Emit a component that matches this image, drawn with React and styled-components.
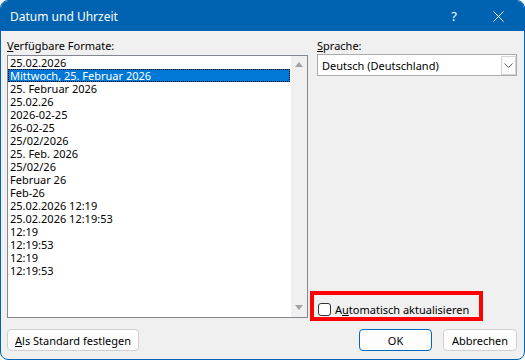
import React from 'react'
import styled, { createGlobalStyle } from 'styled-components'

const formats = [
  '25.02.2026',
  'Mittwoch, 25. Februar 2026',
  '25. Februar 2026',
  '25.02.26',
  '2026-02-25',
  '26-02-25',
  '25/02/2026',
  '25. Feb. 2026',
  '25/02/26',
  'Februar 26',
  'Feb-26',
  '25.02.2026 12:19',
  '25.02.2026 12:19:53',
  '12:19',
  '12:19:53',
  '12:19',
  '12:19:53',
]

export default function App () {
  return (
    <>
      <GlobalStyle />
      <Window>
        <TitleBar>
          <Title>Datum und Uhrzeit</Title>
          <Help>?</Help>
          <Close>
            <svg width="11" height="11" viewBox="0 0 11 11">
              <path d="M0.5 0.5 L10.5 10.5 M10.5 0.5 L0.5 10.5" stroke="#fff" strokeWidth="1" />
            </svg>
          </Close>
        </TitleBar>
        <Body>
          <Main>
            <Column>
              <Label><Key>V</Key>erfügbare Formate:</Label>
              <ListBox>
                <Items>
                  {formats.map((f, i) => (
                    <Item key={i} selected={i === 1}>{f}</Item>
                  ))}
                </Items>
                <Scrollbar>
                  <Arrow />
                  <Arrow down />
                </Scrollbar>
              </ListBox>
            </Column>
            <Column>
              <Label><Key>S</Key>prache:</Label>
              <Combo>
                <ComboText>Deutsch (Deutschland)</ComboText>
                <DropButton>
                  <svg width="9" height="5" viewBox="0 0 9 5">
                    <path d="M0.5 0.5 L4.5 4.5 L8.5 0.5" stroke="#606060" fill="none" strokeWidth="1" />
                  </svg>
                </DropButton>
              </Combo>
              <Spacer />
              <Highlight>
                <CheckBox />
                <span>A<Key>u</Key>tomatisch aktualisieren</span>
              </Highlight>
            </Column>
          </Main>
          <Footer>
            <Button width={132}><Key>A</Key>ls Standard festlegen</Button>
            <Spacer />
            <Button width={73} primary>OK</Button>
            <Button width={74}>Abbrechen</Button>
          </Footer>
        </Body>
      </Window>
    </>
  )
}

const GlobalStyle = createGlobalStyle`
  html, body {
    margin: 0;
    padding: 0;
    background: #fff;
  }
  body {
    font-family: 'Noto Sans', 'DejaVu Sans', sans-serif;
    color: #000;
  }
`

const Window = styled.div`
  width: 525px;
  height: 360px;
  box-sizing: border-box;
  border: 1px solid #0063b1;
  border-radius: 8px;
  overflow: hidden;
  background: #f0f0f0;
  display: flex;
  flex-direction: column;
`

const TitleBar = styled.div`
  height: 30px;
  flex: none;
  background: #0063b1;
  color: #fff;
  display: flex;
  align-items: center;
  padding: 0 3px 0 9px;
  font-size: 12px;
`

const Title = styled.div`
  flex: 1;
`

const Help = styled.div`
  width: 42px;
  text-align: center;
  font-size: 13px;
`

const Close = styled.div`
  width: 46px;
  display: flex;
  justify-content: center;
`

const Body = styled.div`
  flex: 1;
  display: flex;
  flex-direction: column;
  padding: 7px 7px 8px 6px;
  font-size: 11px;
`

const Main = styled.div`
  display: grid;
  grid-template-columns: 301px 200px;
  column-gap: 9px;
  height: 283px;
`

const Column = styled.div`
  display: flex;
  flex-direction: column;
  min-width: 0;
`

const Label = styled.div`
  height: 16px;
  line-height: 16px;
`

const Key = styled.span`
  text-decoration: underline;
`

const ListBox = styled.div`
  margin-top: 1px;
  height: 263px;
  box-sizing: border-box;
  border: 1px solid #828790;
  background: #fff;
  display: grid;
  grid-template-columns: 1fr 16px;
`

const Items = styled.div`
  padding-right: 1px;
`

const Item = styled.div`
  height: 13px;
  line-height: 13px;
  overflow: hidden;
  padding-left: 2px;
  white-space: nowrap;
  background: ${props => props.selected ? '#0078d7' : 'transparent'};
  color: ${props => props.selected ? '#fff' : '#000'};
  outline: ${props => props.selected ? '1px dotted #000' : 'none'};
  outline-offset: -1px;
`

const Scrollbar = styled.div`
  background: #f0f0f0;
  display: flex;
  flex-direction: column;
  justify-content: space-between;
  align-items: center;
  padding: 6px 0 7px;
`

const Arrow = styled.div`
  width: 0;
  height: 0;
  border-left: 4px solid transparent;
  border-right: 4px solid transparent;
  ${props => props.down
    ? 'border-top: 5px solid #a3a3a3;'
    : 'border-bottom: 5px solid #a3a3a3;'}
`

const Combo = styled.div`
  height: 22px;
  box-sizing: border-box;
  border: 1px solid #acacac;
  background: #fff;
  display: flex;
  align-items: center;
  padding-left: 4px;
`

const ComboText = styled.div`
  flex: 1;
`

const DropButton = styled.div`
  width: 15px;
  height: 19px;
  box-sizing: border-box;
  border: 1px solid #d4d4d4;
  background: #fbfbfb;
  display: flex;
  align-items: center;
  justify-content: center;
`

const Spacer = styled.div`
  flex: 1;
`

const Highlight = styled.div`
  margin-left: -7px;
  width: 173px;
  height: 30px;
  box-sizing: border-box;
  border: 4px solid #f00;
  padding: 8px 0 1px 4px;
  display: flex;
  align-items: center;
  gap: 4px;
  white-space: nowrap;
  line-height: 13px;
`

const CheckBox = styled.div`
  width: 13px;
  height: 13px;
  flex: none;
  box-sizing: border-box;
  border: 1px solid #333;
  border-radius: 3px;
  background: #fff;
`

const Footer = styled.div`
  margin-top: 8px;
  display: flex;
  gap: 11px;
`

const Button = styled.div`
  width: ${props => props.width}px;
  height: 22px;
  box-sizing: border-box;
  border: 1px solid ${props => props.primary ? '#0067c0' : '#d0d0d0'};
  border-radius: 4px;
  background: #fdfdfd;
  display: flex;
  align-items: center;
  justify-content: center;
`
